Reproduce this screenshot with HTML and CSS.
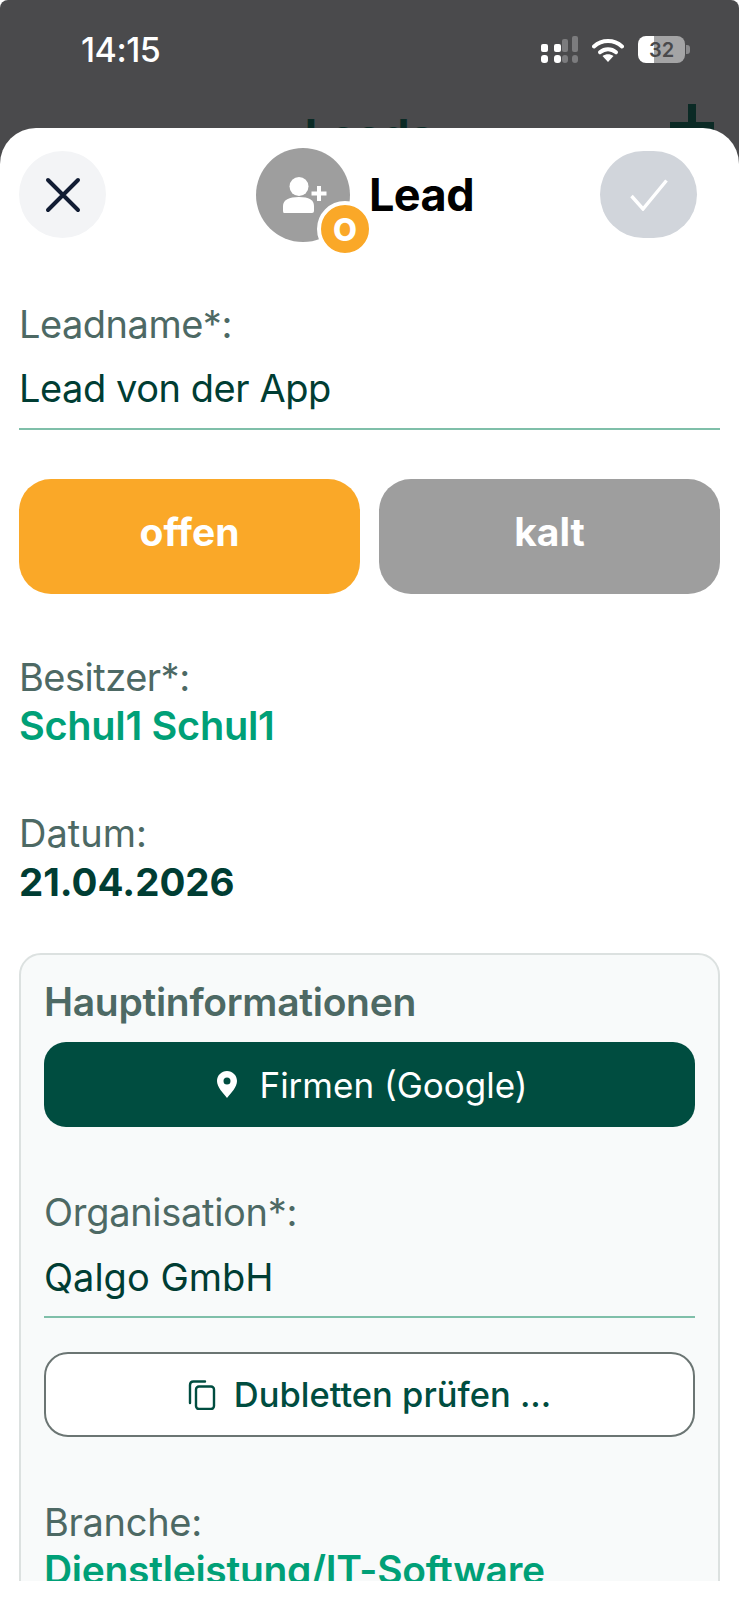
FILE: index.html
```html
<!DOCTYPE html>
<html lang="de">
<head>
<meta charset="utf-8">
<title>Lead</title>
<link rel="stylesheet" href="styles.css">
</head>
<body>
<div class="screen">
  <header class="backdrop">
    <div class="status">
      <span class="time">14:15</span>
      <div class="status-icons">
        <svg class="signal" width="37" height="27" viewBox="0 0 37 27">
          <g fill="#fff">
            <rect x="0" y="8" width="7" height="8" rx="2"/><rect x="0" y="19" width="7" height="8" rx="3"/>
            <rect x="13" y="8" width="7" height="8" rx="2"/><rect x="13" y="19" width="7" height="8" rx="3"/>
          </g>
          <g fill="#7c7c7e">
            <rect x="21" y="3" width="6" height="13" rx="2"/><rect x="21" y="19" width="6" height="8" rx="3"/>
            <rect x="31" y="0" width="6" height="16" rx="2"/><rect x="31" y="19" width="6" height="8" rx="3"/>
          </g>
        </svg>
        <svg class="wifi" width="32" height="24" viewBox="0 0 32 24">
          <path d="M2 8.500C10 1.200 22 1.200 30 8.500" fill="none" stroke="#fff" stroke-width="4" stroke-linecap="round"/>
          <path d="M8 14.200C12.800 10.200 19.200 10.200 24 14.200" fill="none" stroke="#fff" stroke-width="4" stroke-linecap="round"/>
          <path d="M16 24L10.500 18C14 15.600 18 15.600 21.500 18Z" fill="#fff"/>
        </svg>
        <div class="battery"><span>32</span></div>
        <span class="battery-cap"></span>
      </div>
    </div>
    <div class="nav">
      <span class="nav-title">Leads</span>
      <svg class="nav-plus" width="44" height="44" viewBox="0 0 44 44"><path d="M22 0V44M0 22H44" stroke="#0b2a25" stroke-width="8"/></svg>
    </div>
  </header>

  <main class="sheet">
    <div class="sheet-head">
      <button class="round close" aria-label="Schließen">
        <svg width="36" height="36" viewBox="0 0 36 36"><path d="M3 3L33 33M33 3L3 33" stroke="#111c33" stroke-width="4" stroke-linecap="round"/></svg>
      </button>
      <div class="head-title">
        <div class="avatar">
          <svg class="avatar-icon" width="44" height="36" viewBox="0 0 44 36">
            <circle cx="16" cy="9.500" r="9.500" fill="#fff"/>
            <path d="M1 36Q0 36 0 34V29C0 23 6 20 16 20S31 23 31 29V34Q31 36 29 36Z" fill="#fff"/>
            <path d="M36 9V24M28.500 16.500H43.500" stroke="#fff" stroke-width="4"/>
          </svg>
          <span class="badge">O</span>
        </div>
        <h1>Lead</h1>
      </div>
      <button class="round save" aria-label="Speichern">
        <svg width="38" height="32" viewBox="0 0 38 32"><path d="M1.500 17L13 30L36.500 1.500" fill="none" stroke="#fff" stroke-width="3.400"/></svg>
      </button>
    </div>

    <div class="form">
      <label class="label name-label">Leadname*:</label>
      <div class="input">Lead von der App</div>

      <div class="chips">
        <button class="chip offen">offen</button>
        <button class="chip kalt">kalt</button>
      </div>

      <div class="label owner-label">Besitzer*:</div>
      <div class="link">Schul1 Schul1</div>

      <div class="label date-label">Datum:</div>
      <div class="strong">21.04.2026</div>

      <section class="card">
        <h2>Hauptinformationen</h2>
        <button class="wide primary">
          <svg width="20" height="27" viewBox="0 0 20 27"><path fill-rule="evenodd" d="M10 0C4.500 0 0 4.400 0 10C0 16 6 22 10 27C14 22 20 16 20 10C20 4.400 15.500 0 10 0ZM10 6.500A3.500 3.500 0 1 1 10 13.500A3.500 3.500 0 1 1 10 6.500Z" fill="#fff"/></svg>
          Firmen (Google)
        </button>
        <div class="label org-label">Organisation*:</div>
        <div class="input org-input">Qalgo GmbH</div>
        <button class="wide outline">
          <svg width="28" height="30" viewBox="0 0 28 30"><path d="M2 23V5C2 3 3 1.500 5.500 1.500H17" fill="none" stroke="#004d40" stroke-width="2.400" stroke-linecap="round"/><rect x="8" y="6.500" width="18" height="22.500" rx="3" fill="none" stroke="#004d40" stroke-width="2.400"/></svg>
          Dubletten prüfen ...
        </button>
        <div class="label branch-label">Branche:</div>
        <div class="link branch-link">Dienstleistung/IT-Software</div>
      </section>
    </div>
  </main>
</div>
</body>
</html>
```
FILE: styles.css
```css
* { box-sizing: border-box; margin: 0; padding: 0; }
html, body { background: #fff; }
body { font-family: Inter, "Liberation Sans", sans-serif; width: 739px; height: 1600px; overflow: hidden; }
button { font-family: inherit; border: 0; }

.screen { width: 739px; height: 1581px; overflow: hidden; }

.backdrop { height: 170px; background: #4a4a4c; overflow: hidden; border-radius: 8px 8px 0 0; }
.status { height: 100px; display: flex; justify-content: space-between; align-items: flex-start; padding: 36px 49px 0 81px; }
.time { color: #fff; font-size: 34px; line-height: 28px; font-weight: 500; letter-spacing: -0.5px; }
.status-icons { display: flex; align-items: center; }
.wifi { margin-left: 14px; }
.battery { width: 47px; height: 27px; margin-left: 14px; border-radius: 8px; background: linear-gradient(90deg, #fff 0 33%, #a4a4a5 33%); display: flex; align-items: center; justify-content: center; }
.battery span { font-size: 20px; font-weight: 600; color: #49494b; line-height: 1; }
.battery-cap { width: 4px; height: 9px; margin-left: 1px; background: #8a8a8c; border-radius: 0 3px 3px 0; }
.nav { position: relative; display: flex; justify-content: center; height: 70px; }
.nav-title { font-size: 44px; font-weight: 700; line-height: 52px; color: #0b2a25; margin-top: 9px; }
.nav-plus { position: absolute; top: 4px; right: 25px; }

.sheet { height: 1453px; background: #fff; border-radius: 36px 36px 0 0; margin-top: -42px; position: relative; overflow: hidden; }
.sheet-head { display: flex; justify-content: space-between; align-items: center; padding: 23px 42px 0 19px; height: 110px; }
.round { display: flex; align-items: center; justify-content: center; height: 87px; border-radius: 44px; }
.close { width: 87px; background: #f3f4f6; }
.save { width: 97px; background: #d1d5db; }
.head-title { display: flex; align-items: center; gap: 19px; margin-left: 24px; margin-top: 1px; }
.avatar { position: relative; width: 94px; height: 94px; border-radius: 50%; background: #9e9e9e; display: flex; align-items: center; justify-content: center; }
.avatar-icon { margin-left: 4px; }
.badge { position: absolute; left: 61px; top: 53px; width: 56px; height: 56px; border-radius: 50%; background: #faa828; border: 4px solid #fff; color: #fff; font-size: 31px; font-weight: 800; display: flex; align-items: center; justify-content: center; line-height: 1; }
h1 { font-size: 45px; line-height: 50px; font-weight: 700; color: #000; letter-spacing: -0.5px; }

.form { padding: 0 19px; }
.label { font-size: 38px; line-height: 44px; color: #4d6964; letter-spacing: -0.5px; }
.name-label { display: block; margin-top: 64px; }
.input { font-size: 38px; line-height: 44px; color: #003d33; letter-spacing: -0.45px; border-bottom: 2px solid #7fbfa9; }
.form > .input { margin-top: 20px; padding-bottom: 18px; }
.chips { display: grid; grid-template-columns: 1fr 1fr; gap: 19px; margin-top: 49px; }
.chip { height: 115px; padding-bottom: 10px; border-radius: 32px; color: #fff; font-size: 39px; font-weight: 700; }
.offen { background: #faa828; }
.kalt { background: #9e9e9e; }
.owner-label { margin-top: 61px; }
.link { font-size: 39.700px; line-height: 44px; font-weight: 600; color: #00a077; letter-spacing: -0.3px; margin-top: 5px; white-space: nowrap; }
.date-label { margin-top: 63px; letter-spacing: 0; }
.strong { font-size: 38.500px; line-height: 44px; font-weight: 700; color: #003d33; margin-top: 5px; }

.card { height: 800px; margin-top: 49px; padding: 24px 23px 0; background: #f8fafa; border: 2px solid #dce1e0; border-radius: 22px; }
h2 { font-size: 39px; line-height: 46px; font-weight: 600; color: #4d6964; letter-spacing: -0.3px; }
.wide { width: 100%; display: flex; align-items: center; justify-content: center; gap: 22px; font-size: 35px; }
.primary { height: 85px; margin-top: 17px; padding-left: 6px; background: #004d40; border-radius: 22px; color: #fff; }
.org-label { margin-top: 63px; letter-spacing: -0.3px; }
.org-input { margin-top: 21px; padding-bottom: 17px; letter-spacing: 0; }
.outline { height: 85px; margin-top: 34px; background: #fff; border: 2px solid #6b7573; border-radius: 24px; color: #004d40; font-weight: 500; font-size: 34.500px; gap: 18px; }
.branch-label { margin-top: 63px; letter-spacing: -0.3px; }
.branch-link { margin-top: 4px; font-size: 39px; }
```
